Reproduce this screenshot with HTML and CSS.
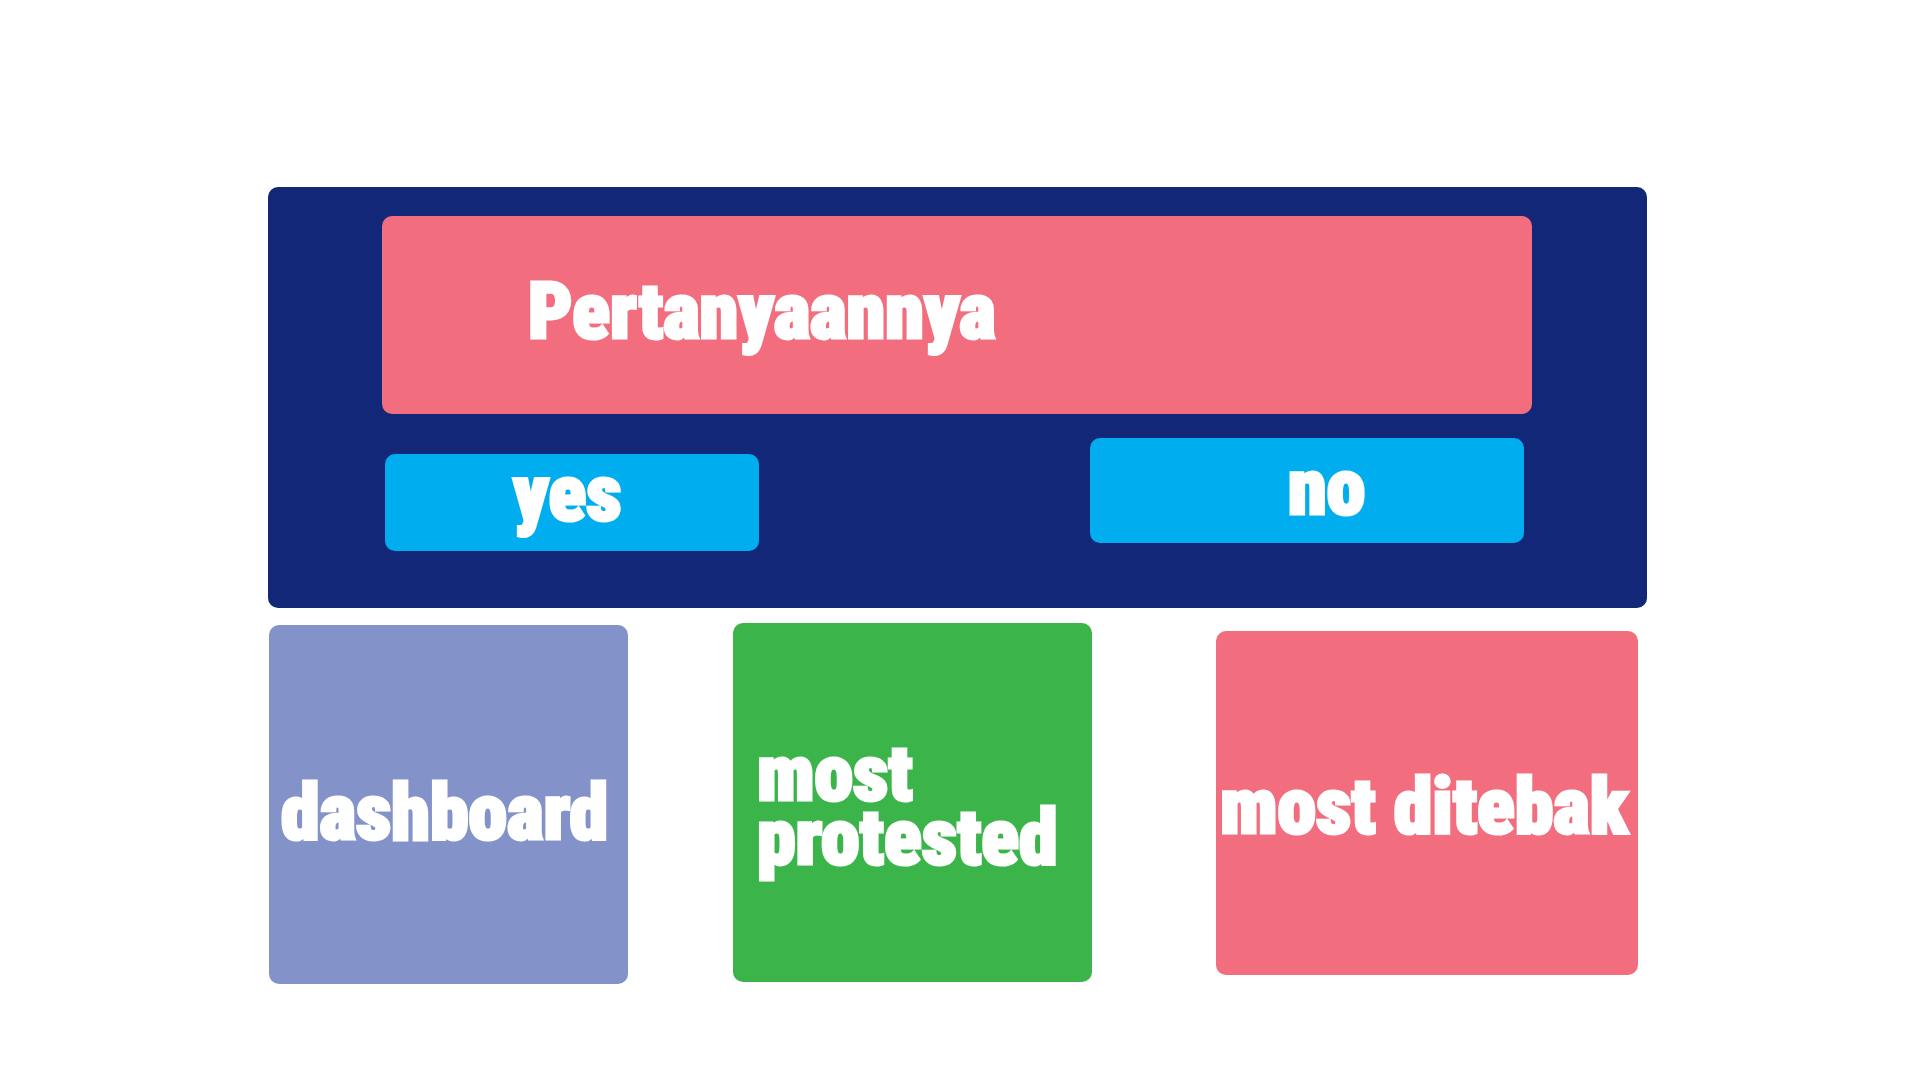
FILE: index.html
```
<!DOCTYPE html>
<html lang="id">
<head>
<meta charset="utf-8">
<meta name="viewport" content="width=device-width, initial-scale=1">
<title>Pertanyaannya</title>
<link rel="stylesheet" href="styles.css">
</head>
<body>
<main class="page">
  <section class="panel">
    <h1 class="question">Pertanyaannya</h1>
    <div class="answers">
      <button class="answer answer-yes" type="button">yes</button>
      <button class="answer answer-no" type="button">no</button>
    </div>
  </section>
  <nav class="tiles">
    <a class="tile tile-dashboard" href="#dashboard">dashboard</a>
    <a class="tile tile-protested" href="#protested">most protested</a>
    <a class="tile tile-ditebak" href="#ditebak">most ditebak</a>
  </nav>
</main>
</body>
</html>
```
FILE: styles.css
```
* {
  box-sizing: border-box;
}

body {
  margin: 0;
  background: #fff;
  color: #fff;
  font: 900 78px/64px "Roboto Condensed", Roboto, "Liberation Sans", sans-serif;
  -webkit-text-stroke: 3px #fff;
}

.page {
  padding: 187px 273px 96px 268px;
}

.panel,
.question,
.answer,
.tile {
  border-radius: 10px;
}

.panel {
  padding: 29px 115px 37px 114px;
  background: #122777;
}

.question {
  min-height: 198px;
  margin: 0;
  padding: 64px 146px;
  background: #f26d7e;
  font: inherit;
}

.answers {
  display: grid;
  grid-template-columns: minmax(0, 374fr) minmax(0, 331fr) minmax(0, 434fr);
  align-items: start;
  min-height: 157px;
  padding: 24px 8px 0 3px;
}

.answer {
  display: flex;
  align-items: flex-start;
  border: 0;
  background: #00aeef;
  color: inherit;
  font: inherit;
  line-height: 40px;
  -webkit-text-stroke: inherit;
  cursor: pointer;
}

.answer-yes {
  min-height: 97px;
  margin-top: 16px;
  padding: 20px 0 0 128px;
}

.answer-no {
  grid-column: 3;
  min-height: 105px;
  padding: 30px 0 0 198px;
}

.tiles {
  display: grid;
  grid-template-columns: minmax(0, 359fr) minmax(0, 105fr) minmax(0, 359fr) minmax(0, 124fr) minmax(0, 422fr);
  align-items: start;
  padding: 15px 9px 0 1px;
}

.tile {
  color: inherit;
  text-decoration: none;
}

.tile-dashboard {
  min-height: 359px;
  margin-top: 2px;
  padding: 156px 0 0 12px;
  background: #8392c9;
}

.tile-protested {
  grid-column: 3;
  min-height: 359px;
  padding: 119px 0 0 24px;
  background: #3bb54a;
}

.tile-ditebak {
  grid-column: 5;
  min-height: 344px;
  margin-top: 8px;
  padding: 144px 0 0 4px;
  background: #f26d7e;
}
```
